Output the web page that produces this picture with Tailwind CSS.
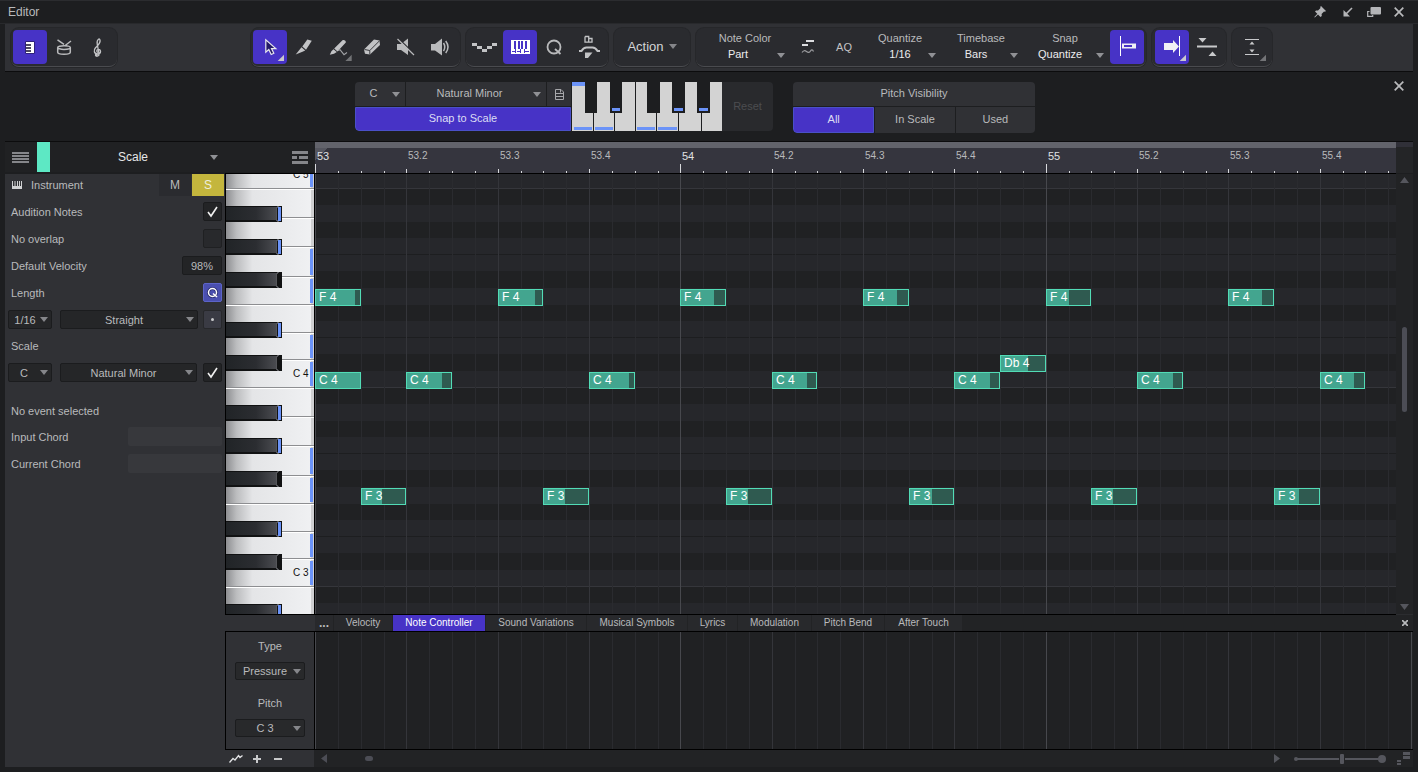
<!DOCTYPE html>
<html lang="en">
<head>
  <meta charset="UTF-8" />
  <meta name="viewport" content="width=device-width, initial-scale=1" />
  <title>Editor</title>
  <script src="https://cdn.jsdelivr.net/npm/@tailwindcss/browser@4"></script>
</head>
<body class="bg-[#1d1e20] text-[#b9babc] text-[11px] leading-[14px] font-['Liberation_Sans',Arial,sans-serif]">
  <div class="h-screen min-h-[560px] flex flex-col overflow-hidden pb-[5px] border-t border-[#2b2c2f]">

    <!-- Title bar -->
    <header class="h-[23px] shrink-0 flex items-center justify-between pl-2 pr-[6px] border-b border-[#28292c]">
      <h1 class="text-xs">Editor</h1>
      <div class="flex items-center">
        <button class="w-7 h-5 grid place-items-center" aria-label="Pin">
          <svg width="12" height="12" viewBox="0 0 12 12" fill="#b4b5b8"><path d="M7 0l5 5-1 .8-1-.2-2.400 2.500.2 2L6.500 11 4 8.500.8 11.600l-.5-.5L3.300 7.700 1 5.500l1-1 2 .1L6.500 2 6.200 1z"/></svg>
        </button>
        <button class="w-7 h-5 grid place-items-center" aria-label="Detach">
          <svg width="10" height="10" viewBox="0 0 10 10"><path d="M9 1L3 7" stroke="#b4b5b8" stroke-width="1.600"/><path d="M.5 3v6.500H7z" fill="#b4b5b8"/></svg>
        </button>
        <button class="w-6 h-5 grid place-items-center" aria-label="Maximize">
          <svg width="14" height="10" viewBox="0 0 14 10"><rect x="3.500" y="0" width="10.500" height="7.500" rx="1" fill="#b4b5b8"/><path d="M2.500 4.500H.7v4.800h5V8" fill="none" stroke="#b4b5b8" stroke-width="1.200"/></svg>
        </button>
        <button class="w-[26px] h-5 grid place-items-center" aria-label="Close editor">
          <svg width="10" height="10" viewBox="0 0 10 10" stroke="#b9babc" stroke-width="1.700"><path d="M.7.7l8.600 8.600M9.300.7L.7 9.300"/></svg>
        </button>
      </div>
    </header>

    <!-- Toolbar -->
    <div class="h-12 shrink-0 mx-[5px] pl-[6px] pb-[1px] flex items-center gap-[6px] bg-[#303135] border-b border-[#0c0c0d]">
      <div class="h-[39px] flex items-center px-[2px] mr-[128px] rounded-lg bg-[#2a2b2f] border-b border-[#4a4b4f] shadow-[0_0_0_1px_#26272a]">
        <button class="size-[34px] rounded bg-[#4733c6]" aria-label="Piano view">
          <svg width="34" height="34"><rect x="12.500" y="11.500" width="9" height="12" fill="#16112f"/><rect x="13" y="12" width="8" height="11" fill="#fff"/><path d="M13 15h5M13 18h5M13 21h5" stroke="#16112f" stroke-width="1.500"/></svg>
        </button>
        <button class="size-[34px]" aria-label="Drum view">
          <svg width="34" height="34" fill="none" stroke="#b9babc" stroke-width="1.500"><path d="M10.700 17.500c0-1 2.800-1.800 6.300-1.800s6.300.8 6.300 1.800-2.800 1.900-6.300 1.900-6.300-.9-6.300-1.900v4.800c0 1.200 2.800 2 6.300 2s6.300-.8 6.300-2v-4.800M10.500 9.800l6.500 4.500M24 11l-6.500 5"/></svg>
        </button>
        <button class="size-[34px]" aria-label="Score view">
          <svg width="34" height="34" fill="none" stroke="#c2c3c5" stroke-width="1.300"><path d="M17 22.500c-1.700-.5-1.700-3.200.4-3.200 2.600 0 3.300 4.500-.6 4.700-3.900 0-4.500-3.800-2.300-6.200 1.800-2 4.600-3.800 4.600-6.800 0-1.300-.7-2.300-1.300-2-1.400.8-1.900 3-1.600 5l1.900 10.200c.3 2.200-3.300 2.700-3.600.9"/><circle cx="15.300" cy="25" r=".8" fill="#c2c3c5"/></svg>
        </button>
      </div>

      <div class="h-[39px] flex items-center pl-[2px] pr-[3px] rounded-lg bg-[#2a2b2f] border-b border-[#4a4b4f] shadow-[0_0_0_1px_#26272a]">
        <button class="size-[34px] rounded bg-[#4733c6]" aria-label="Arrow tool">
          <svg width="34" height="34"><path d="M12.800 9.800v12.400l3-2.700 2.400 5 2.600-1.200-2.300-4.700h4.300z" fill="#241a66" stroke="#e8e8ee" stroke-width="1.200"/><path d="M31 24.700V31h-6.300z" fill="#c8c8ce"/></svg>
        </button>
        <button class="size-[34px]" aria-label="Knife tool">
          <svg width="34" height="34" fill="#c2c3c5"><path d="M20.300 9.600l4.500 1.200-5.800 9-3.700-3.300zM14.500 17.300l3.700 3.200-2.700 1.300-6.800 2.600z"/></svg>
        </button>
        <button class="size-[34px]" aria-label="Paint tool">
          <svg width="34" height="34"><path d="M21.500 10.200c1.300-1 4 .8 3.300 2.300l-8.300 9-3.300-2.900zM12.500 19.300l3.300 2.800-2.800 1.700-4.200 1 1.600-3.500z" fill="#c2c3c5"/><path d="M17 20.500l2-.8 4 5 3-2.200" fill="none" stroke="#a3a4a7" stroke-width="1.100"/><path d="M30.700 24.700v6.300h-6.300z" fill="#737477"/></svg>
        </button>
        <button class="size-[34px]" aria-label="Eraser tool">
          <svg width="34" height="34"><path d="M9 19.500L19 9.500l5.500 1 .5 4.500-10 9.500-5-.7z" fill="#c2c3c5"/><path d="M9.500 19.500l5.300 1 9.500-9.500M14.800 20.500v4" fill="none" stroke="#3a3b3f" stroke-width="1"/></svg>
        </button>
        <button class="size-[34px]" aria-label="Mute tool">
          <svg width="34" height="34"><path d="M8 14h4l7-5.500V25l-7-5H8z" fill="#b9babc"/><path d="M9 8l16.500 16" stroke="#2a2b2f" stroke-width="1.200"/><path d="M8.500 9L25 25" stroke="#b9babc" stroke-width="1.200"/></svg>
        </button>
        <button class="size-[34px]" aria-label="Listen tool">
          <svg width="34" height="34"><path d="M8 14h4l7-5.500V25.500l-7-5H8z" fill="#b9babc"/><path d="M20.500 13q2.500 4 0 8M22.700 11q4.600 6 0 12" fill="none" stroke="#b9babc" stroke-width="1.500"/></svg>
        </button>
      </div>

      <div class="h-[39px] flex items-center px-[3px] rounded-lg bg-[#2a2b2f] border-b border-[#4a4b4f] shadow-[0_0_0_1px_#26272a]">
        <button class="size-[34px]" aria-label="Automation">
          <svg width="34" height="34" fill="#c2c3c5"><path d="M3 13h5v3h5v3h5v-3h5v-3h5v3h-5v3h-5v3h-5v-3H8v-3H3z"/></svg>
        </button>
        <button class="size-[34px] rounded bg-[#4733c6]" aria-label="Scale keyboard">
          <svg width="34" height="34" shape-rendering="crispEdges"><rect x="8" y="10" width="19" height="14" fill="#fff"/><path d="M11 11h2v8h-2zM15 11h2v8h-2zM18 11h2v8h-2zM22 11h2v8h-2zM9 21h3v1H9zM14 21h3v1h-3zM22 21h4v1h-4zM12 19h1v4h-1zM17 19h1v4h-1zM21 19h1v4h-1z" fill="#4733c6"/></svg>
        </button>
        <button class="size-[34px]" aria-label="Quantize">
          <svg width="34" height="34" fill="none" stroke="#b9babc" stroke-width="1.800"><circle cx="17" cy="17" r="6.500"/><path d="M18 19l5.500 5"/></svg>
        </button>
        <button class="size-[34px]" aria-label="Humanize">
          <svg width="34" height="34" fill="none" stroke="#c2c3c5"><path d="M14 6.500v5.700h7V8.500h-3.300M14 6.500h3.700v5.700" stroke-width="1.300"/><path d="M8 21h2.500q2-3.500 5-3.500h6q3 0 5 3.500H29" stroke-width="2"/><path d="M14 22.500h7.500L17 28H14z" fill="#c2c3c5" stroke="none"/></svg>
        </button>
      </div>

      <div class="h-[39px] w-[76px] flex items-center justify-center rounded-lg bg-[#2a2b2f] border-b border-[#4a4b4f] shadow-[0_0_0_1px_#26272a]">
        <button class="h-[34px] flex items-center gap-[5px] text-[13px] text-[#d4d5d7]">Action
          <svg width="8" height="5" fill="#85868a"><path d="M0 0h8L4 5z"/></svg>
        </button>
      </div>

      <div class="h-[39px] flex items-center px-[2px] rounded-lg bg-[#2a2b2f] border-b border-[#4a4b4f] shadow-[0_0_0_1px_#26272a]">
        <div class="relative w-[94px] mb-[2px] flex flex-col gap-[2px] text-center">
          <label for="noteColor">Note Color</label>
          <select id="noteColor" class="appearance-none w-full h-[14px] pr-[14px] text-center text-[#ececee]"><option>Part</option></select>
          <svg class="absolute right-[7px] bottom-[3px] pointer-events-none" width="8" height="5" fill="#909195"><path d="M0 0h8L4 5z"/></svg>
        </div>
        <button class="w-8 h-[34px]" aria-label="Apply mode">
          <svg width="32" height="34"><path d="M14 11h8M10 15h6" stroke="#dcdde0" stroke-width="2"/><path d="M10 22.500q2-3 4.500-1t4-.5 3 .5" fill="none" stroke="#9a9b9e" stroke-width="1.200"/></svg>
        </button>
        <button class="w-10 h-[34px] text-[#c2c3c5]">AQ</button>
        <div class="relative w-[76px] mb-[2px] flex flex-col gap-[2px] text-center">
          <label for="quantize" class="pr-[4px]">Quantize</label>
          <select id="quantize" class="appearance-none w-full h-[14px] pr-[4px] text-center text-[#ececee]"><option>1/16</option></select>
          <svg class="absolute right-1 bottom-[3px] pointer-events-none" width="8" height="5" fill="#909195"><path d="M0 0h8L4 5z"/></svg>
        </div>
        <div class="relative w-[82px] mb-[2px] flex flex-col gap-[2px] text-center">
          <label for="timebase">Timebase</label>
          <select id="timebase" class="appearance-none w-full h-[14px] pr-[10px] text-center text-[#ececee]"><option>Bars</option></select>
          <svg class="absolute right-1 bottom-[3px] pointer-events-none" width="8" height="5" fill="#909195"><path d="M0 0h8L4 5z"/></svg>
        </div>
        <div class="relative w-[88px] mb-[2px] pr-[2px] flex flex-col gap-[2px] text-center">
          <label for="snap">Snap</label>
          <select id="snap" class="appearance-none w-full h-[14px] pr-[10px] text-center text-[#ececee]"><option>Quantize</option></select>
          <svg class="absolute right-[6px] bottom-[3px] pointer-events-none" width="8" height="5" fill="#909195"><path d="M0 0h8L4 5z"/></svg>
        </div>
        <button class="size-[34px] rounded bg-[#4733c6]" aria-label="Snap to grid">
          <svg width="34" height="34"><path d="M10.500 6v20" stroke="#fff"/><path d="M12 13.500h14v5H12zM14 15v2h8v-2z" fill="#f0f0f4" fill-rule="evenodd"/></svg>
        </button>
      </div>

      <div class="h-[39px] flex items-center px-[3px] rounded-lg bg-[#2a2b2f] border-b border-[#4a4b4f] shadow-[0_0_0_1px_#26272a]">
        <button class="size-[34px] rounded bg-[#4733c6]" aria-label="Autoscroll">
          <svg width="34" height="34"><path d="M9 13h9v-3l6 6.500-6 6.500v-3H9z" fill="#f0f0f4"/><path d="M24.500 6v20" stroke="#fff"/><path d="M31 24.700V31h-6.300z" fill="#c8c8ce"/></svg>
        </button>
        <button class="size-[34px]" aria-label="Cursor follows edit">
          <svg width="34" height="34" fill="#c8c9cb"><path d="M8 15.500h20v2H8zM9.500 8h8L13.500 12.500zM19.500 26h8L23.500 21.500z"/></svg>
        </button>
      </div>

      <div class="h-[39px] flex items-center px-[3px] rounded-lg bg-[#2a2b2f] border-b border-[#4a4b4f] shadow-[0_0_0_1px_#26272a]">
        <button class="size-[34px]" aria-label="Zoom vertically">
          <svg width="34" height="34" fill="#c8c9cb"><path d="M10 9h14v1H10zM10 24h14v1H10zM14.500 14.500h5L17 11.500zM14.500 19.500h5L17 22.500z"/><path d="M31 24.700V31h-6.300z" fill="#737477"/></svg>
        </button>
      </div>
    </div>

    <!-- Scale assistant -->
    <div class="h-[70px] shrink-0 mx-[5px] flex border-b border-[#0c0c0d]">
      <div class="flex-1 flex justify-center gap-5 pt-[10px]">
        <div class="h-[49px] flex rounded-[4px] overflow-hidden">
          <div class="w-[217px] pr-px flex flex-col gap-px">
            <div class="h-6 flex gap-px">
              <div class="relative w-[50px] bg-[#303135]">
                <select aria-label="Root note" class="appearance-none size-full pr-[13px] pb-[2px] text-center"><option>C</option></select>
                <svg class="absolute right-[5px] top-[10px] pointer-events-none" width="8" height="5" fill="#909195"><path d="M0 0h8L4 5z"/></svg>
              </div>
              <div class="relative w-[140px] bg-[#303135]">
                <select aria-label="Scale type" class="appearance-none size-full pr-[13px] pb-[2px] text-center"><option>Natural Minor</option></select>
                <svg class="absolute right-[5px] top-[10px] pointer-events-none" width="8" height="5" fill="#909195"><path d="M0 0h8L4 5z"/></svg>
              </div>
              <button class="flex-1 bg-[#303135] grid place-items-center" aria-label="Scale presets">
                <svg width="9" height="11" fill="none" stroke="#a6a7aa"><path d="M.5.5H6L8.500 3v7.500h-8zM.5 4.500h8M.5 7.500h8M5.500.5v3"/></svg>
              </button>
            </div>
            <button class="flex-1 rounded-bl-[4px] bg-[#4733c6] border border-[#4a50c8] pb-[2px] text-[#dcdcf4]">Snap to Scale</button>
          </div>
          <svg width="150" height="49" shape-rendering="crispEdges">
            <path d="M0 0h150v49H0z" fill="#d3d3d3"/>
            <path d="M21 30h1v19h-1zM42 30h1v19h-1zM63 0h1v49h-1zM84 30h1v19h-1zM106 30h1v19h-1zM129 30h1v19h-1zM13 0h12v31H13zM38 0h12v31H38zM75 0h13v31H75zM100 0h13v31h-13zM125 0h13v31h-13z" fill="#1d1e20"/>
            <path d="M0 0h13v4H0zM2 45h18v3H2zM23 45h18v3H23zM65 45h18v3H65zM86 45h19v3H86zM40 26h8v3h-8zM102 26h9v3h-9zM127 26h9v3h-9z" fill="#6b93f8"/>
          </svg>
          <button class="w-[51px] pb-[2px] bg-[#292a2d] text-[#4c4d50]" disabled>Reset</button>
        </div>
        <div class="w-[242px] h-[51px] flex flex-col gap-px rounded-[4px] overflow-hidden">
          <div class="h-6 bg-[#303135] text-center leading-[22px]">Pitch Visibility</div>
          <div class="flex-1 flex gap-px">
            <button class="flex-1 rounded-bl-[4px] bg-[#4733c6] border border-[#4a50c8] pb-[2px] text-[#dcdcf4]">All</button>
            <button class="flex-1 pb-[2px] bg-[#303135]">In Scale</button>
            <button class="flex-1 pb-[2px] bg-[#303135]">Used</button>
          </div>
        </div>
      </div>
      <button class="w-7 h-7 grid place-items-center" aria-label="Close scale assistant">
        <svg width="10" height="10" viewBox="0 0 10 10" stroke="#b9babc" stroke-width="1.700"><path d="M.7.7l8.600 8.600M9.300.7L.7 9.300"/></svg>
      </button>
    </div>

    <!-- Track header and ruler -->
    <div class="h-8 shrink-0 mx-[5px] flex">
      <div class="w-[310px] h-[30px] flex items-center shrink-0 pl-[7px] pr-[7px] bg-[#202123]">
        <button aria-label="Menu"><svg width="17" height="11" fill="#85868a"><path d="M0 0h17v2H0zM0 3h17v2H0zM0 6h17v2H0zM0 9h17v2H0z"/></svg></button>
        <span class="ml-2 w-[13px] h-[30px] bg-[#5de8c4]"></span>
        <div class="relative w-[168px] mr-auto">
          <select aria-label="Part" class="appearance-none w-full h-5 pr-[2px] text-xs text-center text-[#e6e7e8]"><option>Scale</option></select>
          <svg class="absolute right-0 top-2 pointer-events-none" width="8" height="5" fill="#909195"><path d="M0 0h8L4 5z"/></svg>
        </div>
        <button aria-label="Track list"><svg width="16" height="13" fill="#85868a"><path d="M0 0h16v3H0zM0 5h5v3H0zM7 5h9v3H7zM0 10h16v3H0z"/></svg></button>
      </div>
      <div class="relative flex-1 overflow-hidden bg-[#35353e] border-t-[6px] border-[#62636b]">
        <svg id="ruler" class="absolute inset-0" width="100%" height="26" shape-rendering="crispEdges"></svg>
        <div id="ruler-labels"></div>
      </div>
      <div class="w-[17px] h-[31px] bg-[#242527] border-t-[5px] border-[#303038]"></div>
    </div>

    <div class="flex-1 min-h-0 mx-[5px] flex">
      <!-- Inspector -->
      <aside class="w-[220px] shrink-0 bg-[#303135] pr-[3px]">
        <div class="h-[22px] -mr-[3px] mb-[2px] pl-[7px] pr-px flex items-center gap-px">
          <svg width="10" height="8" fill="#d0d1d3"><path d="M0 0h1v5h1.500V0h1v5H5V0h1v5h1V0h1v5h1V0h1v8H0z"/></svg>
          <span class="ml-2 flex-1">Instrument</span>
          <button class="w-8 h-[22px] bg-[#2a2b2f] text-xs">M</button>
          <button class="w-8 h-[22px] bg-[#c4b63d] text-xs text-[#eeeedd]">S</button>
        </div>
        <label class="h-[27px] pl-[6px] flex items-center justify-between">Audition Notes
          <span class="relative size-[19px]">
            <input type="checkbox" checked class="peer appearance-none size-[19px] rounded-[2px] bg-[#232426] border border-[#1b1c1e]">
            <svg class="absolute inset-0 hidden peer-checked:block" width="19" height="19"><path d="M5 10l3 4 6-9" fill="none" stroke="#f0f0f0" stroke-width="1.600"/></svg>
          </span>
        </label>
        <label class="h-[27px] pl-[6px] flex items-center justify-between">No overlap
          <span class="relative size-[19px]">
            <input type="checkbox" class="appearance-none size-[19px] rounded-[2px] bg-[#28292c] border border-[#1f2022]">
          </span>
        </label>
        <label class="h-[27px] pl-[6px] flex items-center justify-between">Default Velocity
          <input value="98%" class="w-10 h-[19px] rounded-[2px] bg-[#232426] border border-[#1b1c1e] text-center">
        </label>
        <div class="h-[27px] pl-[6px] flex items-center justify-between">Length
          <button class="size-[19px] rounded-[2px] bg-[#4a4fb0] border border-[#5c64c8] grid place-items-center" aria-label="Length follows quantize">
            <svg width="13" height="13" fill="none"><circle cx="6.500" cy="6.500" r="4" stroke="#2c2f70" stroke-width="3"/><circle cx="6.500" cy="6.500" r="4" stroke="#fff" stroke-width="1.500"/><path d="M7 7.500l4 3.500" stroke="#fff" stroke-width="1.500"/></svg>
          </button>
        </div>
        <div class="h-[27px] pl-[3px] flex items-center">
          <div class="relative w-11 mr-2">
            <select aria-label="Note length" class="appearance-none w-full h-[19px] pr-[10px] rounded-[2px] bg-[#252628] border border-[#1b1c1e] text-center"><option>1/16</option></select>
            <svg class="absolute right-1 top-[7px] pointer-events-none" width="8" height="5" fill="#85868a"><path d="M0 0h8L4 5z"/></svg>
          </div>
          <div class="relative w-[138px]">
            <select aria-label="Note mode" class="appearance-none w-full h-[19px] pr-[10px] rounded-[2px] bg-[#252628] border border-[#1b1c1e] text-center"><option>Straight</option></select>
            <svg class="absolute right-1 top-[7px] pointer-events-none" width="8" height="5" fill="#85868a"><path d="M0 0h8L4 5z"/></svg>
          </div>
          <button class="ml-auto size-[19px] rounded-[2px] bg-[#3a3b44] border border-[#27282b] grid place-items-center" aria-label="Dotted"><span class="size-[3px] rounded-full bg-[#c8c9cb]"></span></button>
        </div>
        <div class="h-[26px] pl-[6px] flex items-center">Scale</div>
        <div class="h-[27px] pl-[3px] flex items-center mb-[13px]">
          <div class="relative w-11 mr-2">
            <select aria-label="Scale root" class="appearance-none w-full h-[19px] pr-[12px] rounded-[2px] bg-[#252628] border border-[#1b1c1e] text-center"><option>C</option></select>
            <svg class="absolute right-1 top-[7px] pointer-events-none" width="8" height="5" fill="#85868a"><path d="M0 0h8L4 5z"/></svg>
          </div>
          <div class="relative w-[137px]">
            <select aria-label="Scale" class="appearance-none w-full h-[19px] pr-[10px] rounded-[2px] bg-[#252628] border border-[#1b1c1e] text-center"><option>Natural Minor</option></select>
            <svg class="absolute right-1 top-[7px] pointer-events-none" width="8" height="5" fill="#85868a"><path d="M0 0h8L4 5z"/></svg>
          </div>
          <span class="relative ml-auto size-[19px]">
            <input type="checkbox" checked aria-label="Use scale" class="peer appearance-none size-[19px] rounded-[2px] bg-[#232426] border border-[#1b1c1e]">
            <svg class="absolute inset-0 hidden peer-checked:block" width="19" height="19"><path d="M5 10l3 4 6-9" fill="none" stroke="#f0f0f0" stroke-width="1.600"/></svg>
          </span>
        </div>
        <div class="h-6 pl-[6px] flex items-center">No event selected</div>
        <label class="h-[27px] pl-[6px] flex items-center justify-between">Input Chord
          <input disabled class="w-[94px] h-[19px] rounded-[2px] bg-[#37383c]">
        </label>
        <label class="h-[27px] pl-[6px] flex items-center justify-between">Current Chord
          <input disabled class="w-[94px] h-[19px] rounded-[2px] bg-[#37383c]">
        </label>
      </aside>

      <section class="flex-1 min-w-0 flex flex-col bg-[#222325]">
        <!-- Piano roll -->
        <div class="flex-1 min-h-0 flex">
          <div class="w-[90px] shrink-0 border-l border-b border-t border-black overflow-hidden -mt-px">
            <svg id="keys" width="89" height="640" shape-rendering="crispEdges"></svg>
          </div>
          <div class="relative flex-1 overflow-hidden border-b border-t border-black -mt-px bg-[#202123]">
            <svg id="grid" class="absolute inset-0" width="100%" height="640" shape-rendering="crispEdges"></svg>
            <div id="notes"></div>
          </div>
          <div class="w-[17px] shrink-0 pt-[3px] pb-1 flex flex-col items-center justify-between border-b border-[#2b2c2f]">
            <svg width="9" height="6" fill="#55565d"><path d="M0 6h9L4.500 0z"/></svg>
            <div class="flex-1 flex flex-col items-center">
              <span class="grow-[144]"></span>
              <span class="w-[5px] grow-[84] rounded-full bg-[#4c4d55]"></span>
              <span class="grow-[192]"></span>
            </div>
            <svg width="9" height="6" fill="#55565d"><path d="M0 0h9L4.500 6z"/></svg>
          </div>
        </div>

        <!-- Lane tabs -->
        <div class="h-4 shrink-0 flex text-[10px] leading-4">
          <div class="w-[90px] bg-[#303135]"></div>
          <div class="flex-1 flex gap-px">
            <button class="w-[18px] bg-[#28292c] text-xs leading-3 font-bold">...</button>
            <button class="w-[58px] bg-[#28292c]">Velocity</button>
            <button class="w-[92px] bg-[#4733c6] text-white">Note Controller</button>
            <button class="w-[100px] bg-[#28292c]">Sound Variations</button>
            <button class="w-[100px] bg-[#28292c]">Musical Symbols</button>
            <button class="w-[49px] bg-[#28292c]">Lyrics</button>
            <button class="w-[73px] bg-[#28292c]">Modulation</button>
            <button class="w-[72px] bg-[#28292c]">Pitch Bend</button>
            <button class="w-[77px] bg-[#28292c]">After Touch</button>
          </div>
          <button class="w-[17px] grid place-items-center" aria-label="Close lane">
            <svg width="6" height="6" stroke="#b9babc" stroke-width="1.700"><path d="M0 0l6 6M6 0L0 6"/></svg>
          </button>
        </div>

        <!-- Controller lane -->
        <div class="h-[119px] shrink-0 flex border-y border-black">
          <div class="w-[90px] shrink-0 pt-[7px] px-[9px] flex flex-col items-center bg-[#303135] border-x border-black">
            <label for="ctlType">Type</label>
            <div class="relative mt-[9px] mb-[15px] w-[70px]">
              <select id="ctlType" class="appearance-none w-full h-[18px] pr-[10px] rounded-[2px] bg-[#28292b] border border-[#1b1c1e] text-center"><option>Pressure</option></select>
              <svg class="absolute right-1 top-[7px] pointer-events-none" width="8" height="5" fill="#85868a"><path d="M0 0h8L4 5z"/></svg>
            </div>
            <label for="ctlPitch" class="mt-[1px]">Pitch</label>
            <div class="relative mt-[9px] w-[70px]">
              <select id="ctlPitch" class="appearance-none w-full h-[18px] pr-[10px] rounded-[2px] bg-[#28292b] border border-[#1b1c1e] text-center"><option>C 3</option></select>
              <svg class="absolute right-1 top-[7px] pointer-events-none" width="8" height="5" fill="#85868a"><path d="M0 0h8L4 5z"/></svg>
            </div>
          </div>
          <div class="relative flex-1 overflow-hidden bg-[#202123] mr-px">
            <svg id="lane" class="absolute inset-0" width="100%" height="100%" shape-rendering="crispEdges"></svg>
          </div>
        </div>

        <!-- Bottom scroll bar -->
        <div class="h-[17px] shrink-0 flex items-center">
          <div class="w-[89px] h-full bg-[#303135] flex items-center gap-[10px] pl-1">
            <button aria-label="Show lanes"><svg width="14" height="9" fill="none" stroke="#e0e1e3" stroke-width="1.300"><path d="M.5 8.500l3.500-4 2 1.500 3.500-4.500 1.500 2 2.500-2"/></svg></button>
            <button aria-label="Add lane"><svg width="8" height="8" stroke="#c8c9cb" stroke-width="2"><path d="M4 0v8M0 4h8"/></svg></button>
            <button class="ml-[3px]" aria-label="Remove lane"><svg width="8" height="8" stroke="#c8c9cb" stroke-width="2"><path d="M0 4h8"/></svg></button>
          </div>
          <svg class="ml-[7px]" width="6" height="9" fill="#4c4d55"><path d="M6 0v9L0 4.500z"/></svg>
          <div class="flex-1 px-[38px]"><div class="w-2 h-[5px] rounded-full bg-[#4c4d55]"></div></div>
          <svg width="6" height="9" fill="#55565d"><path d="M0 0v9l6-4.500z"/></svg>
          <svg class="ml-[14px]" width="92" height="10" fill="#55565d"><circle cx="2" cy="5" r="2"/><path d="M2 4h43v2H2zM51 4h38v2H51z"/><rect x="46" y="0" width="4" height="10" rx="1"/><circle cx="88" cy="5" r="4"/></svg>
          <svg class="ml-[11px] mr-[3px]" width="13" height="13" fill="#55565d"><path d="M6 0h7v3H6zM6 4h7v3H6zM0 8h4v2H0zM0 11h4v2H0z"/></svg>
        </div>
      </section>
    </div>
  </div>

  <script>
    const STEP = 22.835;       // width of a 1/16 step
    const ROW = 199 / 12;      // height of one semitone
    const C4_BOTTOM = 213.5;   // bottom edge of the C 4 row
    const C4 = 60;
    const inScale = [0, 2, 3, 5, 7, 8, 10];
    const whiteEdges = [0, 28, 55, 83, 111, 141, 170, 199];
    const whitePitches = [0, 2, 4, 5, 7, 9, 11];
    const blackPitches = [1, 3, 6, 8, 10];

    // pitch, start step, label, part of the note that is lit
    const notes = [
      [65, 0, 'F 4', 0.89], [65, 8, 'F 4', 0.83], [65, 16, 'F 4', 0.74],
      [65, 24, 'F 4', 0.74], [65, 32, 'F 4', 0.52], [65, 40, 'F 4', 0.74],
      [60, 0, 'C 4', 1], [60, 4, 'C 4', 0.8], [60, 12, 'C 4', 0.89],
      [60, 20, 'C 4', 0.8], [60, 28, 'C 4', 0.8], [60, 36, 'C 4', 0.8], [60, 44, 'C 4', 0.76],
      [61, 30, 'Db 4', 0.62],
      [53, 2, 'F 3', 0.47], [53, 10, 'F 3', 0.47], [53, 18, 'F 3', 0.47],
      [53, 26, 'F 3', 0.51], [53, 34, 'F 3', 0.47], [53, 42, 'F 3', 0.55]
    ];

    const rowBottom = pitch => Math.round(C4_BOTTOM - (pitch - C4) * ROW);
    const stepX = i => Math.round(i * STEP);

    function drawGrid() {
      let rows = '';
      for (let p = 34; p <= 74; p++) {
        const top = rowBottom(p + 1), h = rowBottom(p) - top, pc = p % 12;
        if (inScale.includes(pc)) rows += `<rect x="0" y="${top}" width="100%" height="${h}" fill="#26272b"/>`;
        if (pc === 0) rows += `<rect x="0" y="${top + h - 1}" width="100%" height="1" fill="#35363b"/>`;
        if (pc === 3 || pc === 8) rows += `<rect x="0" y="${top + h - 1}" width="100%" height="1" fill="#1d1e20"/>`;
      }
      document.getElementById('grid').innerHTML = rows + stepLines();
      document.getElementById('lane').innerHTML = stepLines();
    }

    function stepLines() {
      let s = '';
      for (let i = 0; i < 140; i++) {
        const color = i % 16 === 0 ? '#47484d' : i % 4 === 0 ? '#34353a' : '#2a2b2f';
        s += `<rect x="${stepX(i)}" y="0" width="1" height="100%" fill="${color}"/>`;
      }
      return s;
    }

    function drawRuler() {
      const ruler = document.getElementById('ruler');
      const visible = ruler.parentElement.clientWidth;
      let ticks = '<path d="M0 0h12L0 12z" fill="#55565f"/><rect x="0" y="25" width="100%" height="1" fill="#000"/>';
      let labels = '';
      for (let i = 0; stepX(i) < visible; i++) {
        const h = i % 16 === 0 ? 9 : i % 4 === 0 ? 4 : 2;
        ticks += `<rect x="${stepX(i)}" y="${25 - h}" width="1" height="${h}" fill="#d8d9dc"/>`;
        // skip a label that would not fit before the right edge
        if (i % 4 === 0 && stepX(i) + 24 < visible) {
          const bar = 53 + Math.floor(i / 16), beat = (i % 16) / 4 + 1;
          const cls = beat === 1 ? 'absolute top-px text-[11px] text-[#e0e1e3]' : 'absolute top-px text-[10px] text-[#b9babc]';
          labels += `<span class="${cls}" style="left:${stepX(i) + 2}px">${beat === 1 ? bar : bar + '.' + beat}</span>`;
        }
      }
      ruler.innerHTML = ticks;
      document.getElementById('ruler-labels').innerHTML = labels;
    }

    function drawKeys() {
      let s = `<defs>
        <linearGradient id="wk"><stop offset="0" stop-color="#8d8e91"/><stop offset=".12" stop-color="#bcbdbf"/><stop offset=".3" stop-color="#e4e5e7"/><stop offset="1" stop-color="#f0f1f3"/></linearGradient>
        <linearGradient id="bk"><stop offset="0" stop-color="#212427"/><stop offset=".6" stop-color="#2b2d31"/><stop offset="1" stop-color="#4a4b50"/></linearGradient>
      </defs><rect width="88" height="640" fill="url(#wk)"/><rect x="85" width="3" height="640" fill="#cfcfd1"/><rect x="88" width="1" height="640" fill="#000"/>`;
      for (let oct = -2; oct <= 1; oct++) {
        const base = Math.round(C4_BOTTOM) - oct * 199;
        whitePitches.forEach((pc, i) => {
          const bottom = base - whiteEdges[i], top = base - whiteEdges[i + 1];
          s += `<rect x="0" y="${bottom - 1}" width="88" height="1" fill="#8d8e91"/><rect x="0" y="${bottom}" width="88" height="1" fill="#fff"/>`;
          if (inScale.includes(pc)) s += `<rect x="84" y="${top + 2}" width="3" height="${bottom - top - 4}" fill="#6b93f8"/>`;
        });
        blackPitches.forEach(pc => {
          const p = C4 + oct * 12 + pc, top = rowBottom(p + 1) + 1;
          s += `<rect x="0" y="${top}" width="56" height="16" fill="#111213"/><rect x="0" y="${top + 1}" width="50" height="13" fill="url(#bk)"/><path d="M50 ${top + 2}l3-2M50 ${top + 14}l3 2M50.500 ${top + 2}v12" stroke="#55565a" fill="none"/>`;
          if (inScale.includes(pc)) s += `<rect x="52" y="${top + 1}" width="3" height="14" fill="#6b93f8"/>`;
        });
        // the lowest octave's C lies below the roll
        if (oct > -2) s += `<text x="67" y="${base - 11}" font-size="10" fill="#111">C ${4 + oct}</text>`;
      }
      document.getElementById('keys').innerHTML = s;
    }

    function drawNotes() {
      document.getElementById('notes').innerHTML = notes.map(([pitch, start, label, lit]) => {
        const left = stepX(start), width = stepX(start + 2) - left;
        const top = rowBottom(pitch + 1) + 1;
        return `<div class="absolute h-[17px] bg-[#2f5a50] border border-[#52dcb6]" style="left:${left}px;top:${top}px;width:${width}px">
          <div class="h-full bg-[#43a58f]" style="width:${lit * 100}%"></div>
          <span class="absolute left-[3px] top-0 text-xs leading-[15px] text-white whitespace-nowrap">${label}</span>
        </div>`;
      }).join('');
    }

    drawGrid();
    drawRuler();
    drawKeys();
    drawNotes();
    new ResizeObserver(drawRuler).observe(document.getElementById('ruler').parentElement);
  </script>
</body>
</html>
